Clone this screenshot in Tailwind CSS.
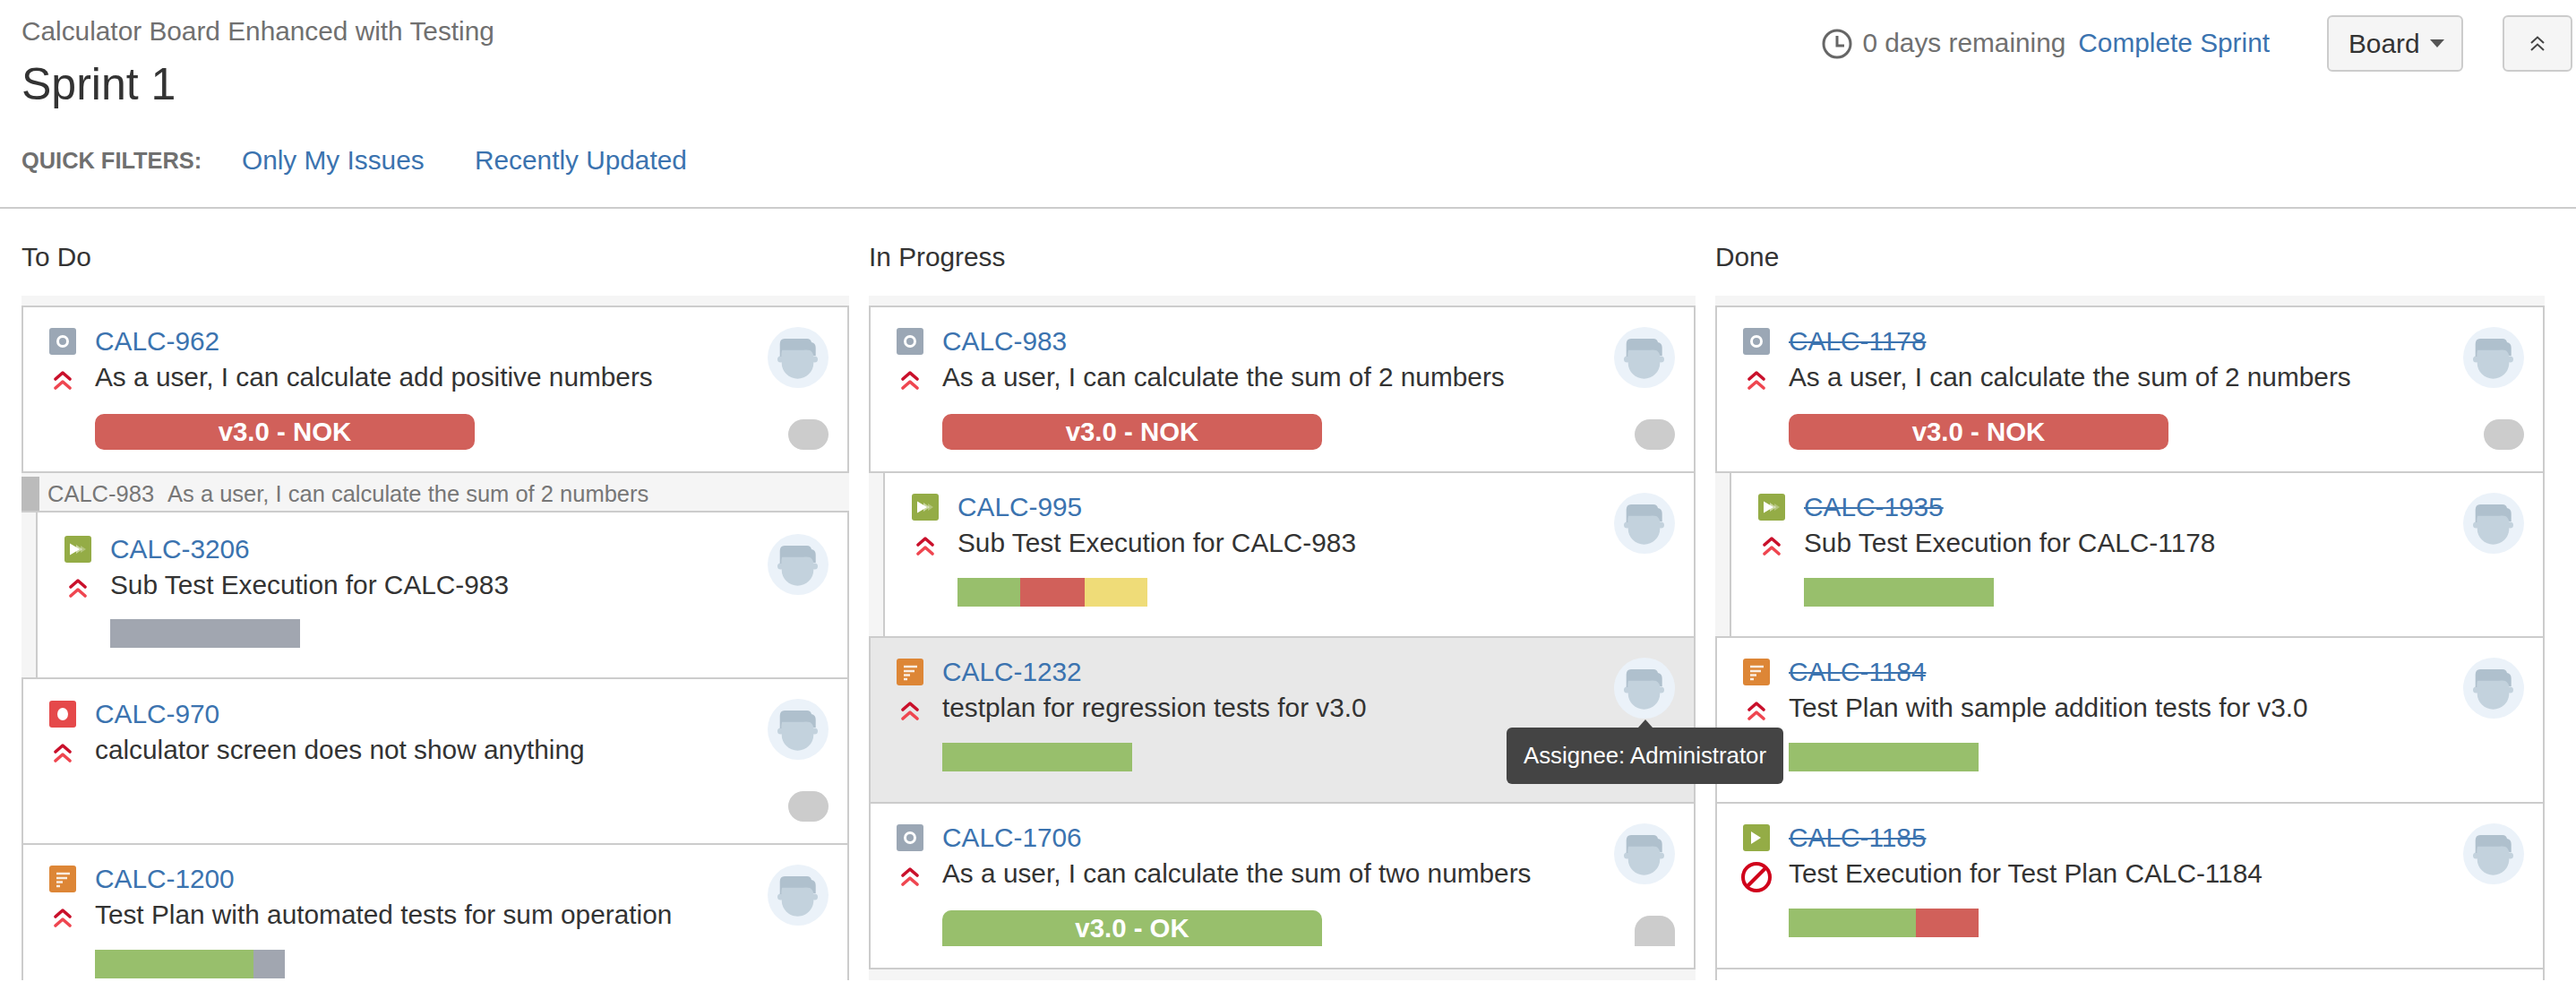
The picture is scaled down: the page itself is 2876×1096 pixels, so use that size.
<!DOCTYPE html>
<html lang="en">
<head>
    <meta charset="UTF-8">
    <title>Sprint 1 - Calculator Board Enhanced with Testing</title>
    <script src="https://cdn.jsdelivr.net/npm/@tailwindcss/browser@4"></script>
</head>
<body class="h-[1096px] overflow-hidden bg-white font-['Liberation_Sans',sans-serif] text-[29.8px] text-[#333]">

    <!-- shared icons -->
    <svg class="hidden">
        <symbol id="avatar" viewBox="0 0 68 68">
            <circle cx="34" cy="34" r="34" fill="#ebf2f9"/>
            <circle cx="14.5" cy="36" r="3.5" fill="#c3d2dd"/>
            <circle cx="52.5" cy="36" r="3.5" fill="#c3d2dd"/>
            <path d="M15.7 25H51.3V40C51.3 50 43 57.7 33.5 57.7S15.7 50 15.7 40Z" fill="#c3d2dd"/>
            <path d="M13.7 33V19Q13.7 13 19 13H44Q48 13 49 17Q53.7 18 53.7 23V32H51.3Q50 27 47 26Q44 25 40 25.7H16Q15.7 28 15.7 33Z" fill="#afc0cd"/>
        </symbol>
        <symbol id="story" viewBox="0 0 30 30">
            <rect width="30" height="30" rx="3" fill="#9ba7b5"/>
            <circle cx="15" cy="15" r="5.5" fill="none" stroke="#fff" stroke-width="3"/>
        </symbol>
        <symbol id="bug" viewBox="0 0 30 30">
            <rect width="30" height="30" rx="3" fill="#e5494a"/>
            <ellipse cx="15" cy="15" rx="6" ry="7" fill="#fff"/>
        </symbol>
        <symbol id="plan" viewBox="0 0 30 30">
            <rect width="30" height="30" rx="3" fill="#dd8636"/>
            <path d="M8 9H23M8 14H20M8 18.5H15M8 23H12" stroke="#fff" stroke-width="2.4" opacity=".85"/>
        </symbol>
        <symbol id="subexec" viewBox="0 0 30 30">
            <rect width="30" height="30" rx="3" fill="#94ac46"/>
            <path d="M13 10L20 15L13 20Z" fill="#fff" opacity=".5"/>
            <path d="M18 11L24 15L18 19Z" fill="#fff" opacity=".3"/>
            <path d="M6 8.5L17 15L6 21.5Z" fill="#fff"/>
        </symbol>
        <symbol id="exec" viewBox="0 0 30 30">
            <rect width="30" height="30" rx="3" fill="#94ac46"/>
            <path d="M9 8L20 15L9 22Z" fill="#fff"/>
        </symbol>
        <symbol id="highest" viewBox="0 0 20 23">
            <path d="M2 10L10 3L18 10" fill="none" stroke="#c9102b" stroke-width="3.6" stroke-linecap="round" stroke-linejoin="round"/>
            <path d="M2 20L10 13L18 20" fill="none" stroke="#ef4650" stroke-width="3.6" stroke-linecap="round" stroke-linejoin="round"/>
        </symbol>
    </svg>

    <header class="relative flex h-[233px] justify-between border-b-2 border-[#ccc] pl-6 pr-[4px]">
        <div>
            <p class="mt-[15px] h-10 leading-10 text-[#707070]">Calculator Board Enhanced with Testing</p>
            <h1 class="mt-[9px] h-[60px] text-[50px] leading-[60px]">Sprint 1</h1>
            <div class="mt-[33px] flex items-center">
                <span class="w-[246px] text-[25.4px] font-bold text-[#707070]">QUICK FILTERS:</span>
                <a class="w-[260px] text-[#3b73af]">Only My Issues</a>
                <a class="text-[#3b73af]">Recently Updated</a>
            </div>
        </div>
        <div class="mt-[17px] flex h-[63px] items-center">
            <svg class="mr-[11px] h-[34px] w-[34px]" viewBox="0 0 34 34" fill="none" stroke="#666" stroke-width="3">
                <circle cx="17" cy="17" r="15"/>
                <path d="M17 8V19H25"/>
            </svg>
            <span class="text-[#707070]">0 days remaining</span>
            <a class="ml-[14px] text-[#3b73af]">Complete Sprint</a>
            <button class="ml-[64px] flex h-[63px] w-[152px] items-center rounded-md border-2 border-[#ccc] bg-[#f5f5f5] pl-[22px] leading-none">
                Board
                <svg class="ml-[11px] h-[9px] w-4" viewBox="0 0 16 9"><path d="M0 0H16L8 9Z" fill="#555"/></svg>
            </button>
            <button class="ml-[44px] flex h-[63px] w-[78px] items-center justify-center rounded-md border-2 border-[#ccc] bg-[#f5f5f5]">
                <svg class="h-[18px] w-[18px]" viewBox="0 0 18 18" fill="none" stroke="#444" stroke-width="2"><path d="M2 8L9 1.5L16 8M2 16L9 9.5L16 16"/></svg>
            </button>
        </div>
    </header>

    <div class="grid grid-cols-[924px_923px_926px] gap-x-[22px] pl-6">
        <h2 class="mt-[34px] h-10 leading-10">To Do</h2>
        <h2 class="mt-[34px] h-10 leading-10">In Progress</h2>
        <h2 class="mt-[34px] h-10 leading-10">Done</h2>

        <!-- To Do -->
        <div class="mt-[23px] h-[764px] overflow-hidden bg-[#f5f5f5] pt-[11px]">
            <div class="flex h-[187px] border-2 border-[#ccc] bg-white pl-[29px] pr-[21px]">
                <div class="w-[30px] shrink-0 pt-[23px]"><svg class="h-[30px] w-[30px]"><use href="#story"/></svg><svg class="mx-[5px] mt-[17px] h-[23px] w-5"><use href="#highest"/></svg></div>
                <div class="ml-[21px] flex-1 pt-[18px]">
                    <a class="block h-10 leading-10 text-[#3b73af]">CALC-962</a>
                    <p class="h-10 leading-10">As a user, I can calculate add positive numbers</p>
                    <div class="mt-[21px] h-10 w-[424px] rounded-[10px] bg-[#d1605a] text-center text-[29.4px] font-bold leading-10 text-white">v3.0 - NOK</div>
                </div>
                <div class="flex w-[68px] flex-col items-end pt-[22px]"><svg class="h-[68px] w-[68px]"><use href="#avatar"/></svg><span class="mt-[35px] h-[34px] w-[45px] rounded-full bg-[#ccc]"></span></div>
            </div>
            <div class="mt-[4px] flex h-[40px] items-center border-b-2 border-[#ccc] text-[25.5px] text-[#777]">
                <span class="h-full w-5 bg-[#bbb]"></span>
                <span class="ml-[9px]">CALC-983</span>
                <span class="ml-[15px]">As a user, I can calculate the sum of 2 numbers</span>
            </div>
            <div class="h-[186px] border-b-2 border-[#ccc]">
                <div class="ml-4 flex h-full border-x-2 border-[#ccc] bg-white pl-[30px] pr-[21px]">
                    <div class="w-[30px] shrink-0 pt-[26px]"><svg class="h-[30px] w-[30px]"><use href="#subexec"/></svg><svg class="mx-[5px] mt-[17px] h-[23px] w-5"><use href="#highest"/></svg></div>
                    <div class="ml-[21px] flex-1 pt-[21px]">
                        <a class="block h-10 leading-10 text-[#3b73af]">CALC-3206</a>
                        <p class="h-10 leading-10">Sub Test Execution for CALC-983</p>
                        <div class="mt-[18px] h-8 w-[212px] bg-[#a1a6b0]"></div>
                    </div>
                    <div class="flex w-[68px] flex-col items-end pt-[24px]"><svg class="h-[68px] w-[68px]"><use href="#avatar"/></svg></div>
                </div>
            </div>
            <div class="flex h-[185px] border-x-2 border-b-2 border-[#ccc] bg-white pl-[29px] pr-[21px]">
                <div class="w-[30px] shrink-0 pt-[24px]"><svg class="h-[30px] w-[30px]"><use href="#bug"/></svg><svg class="mx-[5px] mt-[17px] h-[23px] w-5"><use href="#highest"/></svg></div>
                <div class="ml-[21px] flex-1 pt-[19px]">
                    <a class="block h-10 leading-10 text-[#3b73af]">CALC-970</a>
                    <p class="h-10 leading-10">calculator screen does not show anything</p>
                </div>
                <div class="flex w-[68px] flex-col items-end pt-[22px]"><svg class="h-[68px] w-[68px]"><use href="#avatar"/></svg><span class="mt-[35px] h-[34px] w-[45px] rounded-full bg-[#ccc]"></span></div>
            </div>
            <div class="flex h-[185px] border-x-2 border-[#ccc] bg-white pl-[29px] pr-[21px]">
                <div class="w-[30px] shrink-0 pt-[23px]"><svg class="h-[30px] w-[30px]"><use href="#plan"/></svg><svg class="mx-[5px] mt-[17px] h-[23px] w-5"><use href="#highest"/></svg></div>
                <div class="ml-[21px] flex-1 pt-[18px]">
                    <a class="block h-10 leading-10 text-[#3b73af]">CALC-1200</a>
                    <p class="h-10 leading-10">Test Plan with automated tests for sum operation</p>
                    <div class="mt-[19px] flex h-8 w-[212px]"><span class="w-[177px] bg-[#98bf6c]"></span><span class="w-[35px] bg-[#a1a6b0]"></span></div>
                </div>
                <div class="flex w-[68px] flex-col items-end pt-[22px]"><svg class="h-[68px] w-[68px]"><use href="#avatar"/></svg></div>
            </div>
        </div>

        <!-- In Progress -->
        <div class="mt-[23px] h-[764px] overflow-hidden bg-[#f5f5f5] pt-[11px]">
            <div class="flex h-[187px] border-2 border-[#ccc] bg-white pl-[29px] pr-[21px]">
                <div class="w-[30px] shrink-0 pt-[23px]"><svg class="h-[30px] w-[30px]"><use href="#story"/></svg><svg class="mx-[5px] mt-[17px] h-[23px] w-5"><use href="#highest"/></svg></div>
                <div class="ml-[21px] flex-1 pt-[18px]">
                    <a class="block h-10 leading-10 text-[#3b73af]">CALC-983</a>
                    <p class="h-10 leading-10">As a user, I can calculate the sum of 2 numbers</p>
                    <div class="mt-[21px] h-10 w-[424px] rounded-[10px] bg-[#d1605a] text-center text-[29.4px] font-bold leading-10 text-white">v3.0 - NOK</div>
                </div>
                <div class="flex w-[68px] flex-col items-end pt-[22px]"><svg class="h-[68px] w-[68px]"><use href="#avatar"/></svg><span class="mt-[35px] h-[34px] w-[45px] rounded-full bg-[#ccc]"></span></div>
            </div>
            <div class="h-[184px] border-b-2 border-[#ccc]">
                <div class="ml-4 flex h-full border-x-2 border-[#ccc] bg-white pl-[30px] pr-[21px]">
                    <div class="w-[30px] shrink-0 pt-[23px]"><svg class="h-[30px] w-[30px]"><use href="#subexec"/></svg><svg class="mx-[5px] mt-[17px] h-[23px] w-5"><use href="#highest"/></svg></div>
                    <div class="ml-[21px] flex-1 pt-[18px]">
                        <a class="block h-10 leading-10 text-[#3b73af]">CALC-995</a>
                        <p class="h-10 leading-10">Sub Test Execution for CALC-983</p>
                        <div class="mt-[19px] flex h-8 w-[212px]"><span class="w-[70px] bg-[#98bf6c]"></span><span class="w-[72px] bg-[#d1605a]"></span><span class="w-[70px] bg-[#efdc78]"></span></div>
                    </div>
                    <div class="flex w-[68px] flex-col items-end pt-[22px]"><svg class="h-[68px] w-[68px]"><use href="#avatar"/></svg></div>
                </div>
            </div>
            <div class="relative flex h-[185px] border-x-2 border-b-2 border-[#ccc] bg-[#e8e8e8] pl-[29px] pr-[21px]">
                <div class="w-[30px] shrink-0 pt-[23px]"><svg class="h-[30px] w-[30px]"><use href="#plan"/></svg><svg class="mx-[5px] mt-[17px] h-[23px] w-5"><use href="#highest"/></svg></div>
                <div class="ml-[21px] flex-1 pt-[18px]">
                    <a class="block h-10 leading-10 text-[#3b73af]">CALC-1232</a>
                    <p class="h-10 leading-10">testplan for regression tests for v3.0</p>
                    <div class="mt-[19px] h-8 w-[212px] bg-[#98bf6c]"></div>
                </div>
                <div class="flex w-[68px] flex-col items-end pt-[22px]"><svg class="h-[68px] w-[68px]"><use href="#avatar"/></svg></div>
            </div>
            <div class="flex h-[185px] border-x-2 border-b-2 border-[#ccc] bg-white pl-[29px] pr-[21px]">
                <div class="w-[30px] shrink-0 pt-[23px]"><svg class="h-[30px] w-[30px]"><use href="#story"/></svg><svg class="mx-[5px] mt-[17px] h-[23px] w-5"><use href="#highest"/></svg></div>
                <div class="ml-[21px] flex-1 pt-[18px]">
                    <a class="block h-10 leading-10 text-[#3b73af]">CALC-1706</a>
                    <p class="h-10 leading-10">As a user, I can calculate the sum of two numbers</p>
                    <div class="mt-[21px] h-10 w-[424px] rounded-t-[10px] bg-[#98bf6c] text-center text-[29.4px] font-bold leading-10 text-white">v3.0 - OK</div>
                </div>
                <div class="flex w-[68px] flex-col items-end pt-[22px]"><svg class="h-[68px] w-[68px]"><use href="#avatar"/></svg><span class="mt-[35px] h-[34px] w-[45px] rounded-t-[17px] bg-[#ccc]"></span></div>
            </div>
        </div>

        <!-- Done -->
        <div class="mt-[23px] h-[764px] overflow-hidden bg-[#f5f5f5] pt-[11px]">
            <div class="flex h-[187px] border-2 border-[#ccc] bg-white pl-[29px] pr-[21px]">
                <div class="w-[30px] shrink-0 pt-[23px]"><svg class="h-[30px] w-[30px]"><use href="#story"/></svg><svg class="mx-[5px] mt-[17px] h-[23px] w-5"><use href="#highest"/></svg></div>
                <div class="ml-[21px] flex-1 pt-[18px]">
                    <a class="block h-10 leading-10 text-[#3b73af] line-through">CALC-1178</a>
                    <p class="h-10 leading-10">As a user, I can calculate the sum of 2 numbers</p>
                    <div class="mt-[21px] h-10 w-[424px] rounded-[10px] bg-[#d1605a] text-center text-[29.4px] font-bold leading-10 text-white">v3.0 - NOK</div>
                </div>
                <div class="flex w-[68px] flex-col items-end pt-[22px]"><svg class="h-[68px] w-[68px]"><use href="#avatar"/></svg><span class="mt-[35px] h-[34px] w-[45px] rounded-full bg-[#ccc]"></span></div>
            </div>
            <div class="h-[184px] border-b-2 border-[#ccc]">
                <div class="ml-4 flex h-full border-x-2 border-[#ccc] bg-white pl-[30px] pr-[21px]">
                    <div class="w-[30px] shrink-0 pt-[23px]"><svg class="h-[30px] w-[30px]"><use href="#subexec"/></svg><svg class="mx-[5px] mt-[17px] h-[23px] w-5"><use href="#highest"/></svg></div>
                    <div class="ml-[21px] flex-1 pt-[18px]">
                        <a class="block h-10 leading-10 text-[#3b73af] line-through">CALC-1935</a>
                        <p class="h-10 leading-10">Sub Test Execution for CALC-1178</p>
                        <div class="mt-[19px] h-8 w-[212px] bg-[#98bf6c]"></div>
                    </div>
                    <div class="flex w-[68px] flex-col items-end pt-[22px]"><svg class="h-[68px] w-[68px]"><use href="#avatar"/></svg></div>
                </div>
            </div>
            <div class="flex h-[185px] border-x-2 border-b-2 border-[#ccc] bg-white pl-[29px] pr-[21px]">
                <div class="w-[30px] shrink-0 pt-[23px]"><svg class="h-[30px] w-[30px]"><use href="#plan"/></svg><svg class="mx-[5px] mt-[17px] h-[23px] w-5"><use href="#highest"/></svg></div>
                <div class="ml-[21px] flex-1 pt-[18px]">
                    <a class="block h-10 leading-10 text-[#3b73af] line-through">CALC-1184</a>
                    <p class="h-10 leading-10">Test Plan with sample addition tests for v3.0</p>
                    <div class="mt-[19px] h-8 w-[212px] bg-[#98bf6c]"></div>
                </div>
                <div class="flex w-[68px] flex-col items-end pt-[22px]"><svg class="h-[68px] w-[68px]"><use href="#avatar"/></svg></div>
            </div>
            <div class="flex h-[185px] border-x-2 border-b-2 border-[#ccc] bg-white pl-[29px] pr-[21px]">
                <div class="w-[30px] shrink-0 pt-[23px]">
                    <svg class="h-[30px] w-[30px]"><use href="#exec"/></svg>
                    <svg class="-mx-[2px] mt-[12px] h-[34px] w-[34px]" viewBox="0 0 34 34" fill="none" stroke="#d0021b" stroke-width="4"><circle cx="17" cy="17" r="15"/><path d="M7 27L27 7"/></svg>
                </div>
                <div class="ml-[21px] flex-1 pt-[18px]">
                    <a class="block h-10 leading-10 text-[#3b73af] line-through">CALC-1185</a>
                    <p class="h-10 leading-10">Test Execution for Test Plan CALC-1184</p>
                    <div class="mt-[19px] flex h-8 w-[212px]"><span class="w-[142px] bg-[#98bf6c]"></span><span class="w-[70px] bg-[#d1605a]"></span></div>
                </div>
                <div class="flex w-[68px] flex-col items-end pt-[22px]"><svg class="h-[68px] w-[68px]"><use href="#avatar"/></svg></div>
            </div>
            <div class="h-[40px] border-x-2 border-[#ccc] bg-white"></div>
        </div>
    </div>

    <!-- assignee tooltip, sits over two columns -->
    <div class="absolute left-[1682px] top-[803px] flex w-[309px] flex-col items-center">
        <span class="h-0 w-0 border-x-[8px] border-b-[9px] border-x-transparent border-b-[#444]"></span>
        <div class="flex h-[63px] w-full items-center justify-center rounded-md bg-[#444] text-[25.8px] text-white">Assignee: Administrator</div>
    </div>
</body>
</html>
